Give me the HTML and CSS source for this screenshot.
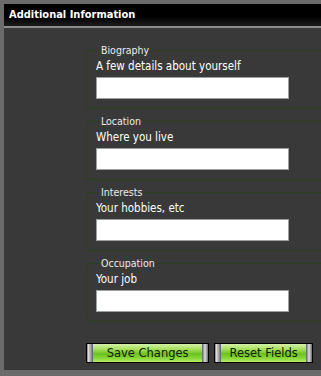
FILE: index.html
```html
<!DOCTYPE html>
<html lang="en">
<head>
  <meta charset="UTF-8" />
  <title>Additional Information</title>
  <link rel="stylesheet" href="styles.css">
</head>
<body>
  <div class="frame">
    <div class="panel">
      <div class="panel-title">Additional Information</div>

      <form class="panel-body">
        <fieldset>
          <legend>Biography</legend>
          <label for="bio">A few details about yourself</label>
          <input type="text" id="bio" />
        </fieldset>

        <fieldset>
          <legend>Location</legend>
          <label for="loc">Where you live</label>
          <input type="text" id="loc" />
        </fieldset>

        <fieldset>
          <legend>Interests</legend>
          <label for="int">Your hobbies, etc</label>
          <input type="text" id="int" />
        </fieldset>

        <fieldset>
          <legend>Occupation</legend>
          <label for="job">Your job</label>
          <input type="text" id="job" />
        </fieldset>

        <div class="actions">
          <button type="button" class="btn btn-save">Save Changes</button>
          <button type="reset" class="btn btn-reset">Reset Fields</button>
        </div>
      </form>
    </div>
  </div>
</body>
</html>
```

FILE: styles.css
```css
body {
  margin: 0;
  background: #6b6b6b;
  font-family: 'DejaVu Sans', Verdana, sans-serif;
}

.frame {
  width: 321px;
  height: 376px;
  padding: 4px 0 6px 4px;
  box-sizing: border-box;
  overflow: hidden;
}

.panel {
  background: #393939;
  height: 100%;
  overflow: hidden;
}

.panel-title {
  height: 22px;
  line-height: 22px;
  padding-left: 5px;
  background: linear-gradient(#000 0%, #000 55%, #1c1c1c 100%);
  border-bottom: 2px solid #8c8c8c;
  color: #fff;
  font-family: 'DejaVu Sans Condensed', 'DejaVu Sans', sans-serif;
  font-weight: bold;
  font-size: 11px;
}

.panel-body {
  padding: 16px 0 0 82px;
}

fieldset {
  width: 300px;
  margin: 0 0 6px 0;
  padding: 3px 0 9px 9px;
  border: 1px solid #2c3f1c;
  border-radius: 4px;
  display: flex;
  flex-direction: column;
}

legend {
  margin-left: 3px;
  padding: 0 2px;
  color: #ececec;
  font-family: 'DejaVu Sans Condensed', 'DejaVu Sans', sans-serif;
  font-size: 10.5px;
}

label {
  color: #fff;
  font-family: 'DejaVu Sans Condensed', 'DejaVu Sans', sans-serif;
  font-size: 11.5px;
  line-height: 14px;
  margin-bottom: 4px;
}

input {
  width: 193px;
  height: 22px;
  box-sizing: border-box;
  margin: 0;
  border: 1px solid #9aa0a4;
  background: #fff;
}

.actions {
  display: flex;
  justify-content: flex-end;
  gap: 5px;
  padding: 15px 8px 0 0;
}

.btn {
  height: 20px;
  padding: 0;
  border: 1px solid #000;
  color: #14200a;
  font-family: 'DejaVu Sans', Verdana, sans-serif;
  font-size: 11.5px;
  background:
    linear-gradient(to right, #4a4a4a 0, #e8e8e8 1px, #9a9a9a 4px, #5a5a5a 6px, transparent 6px,
      transparent calc(100% - 6px), #5a5a5a calc(100% - 6px), #e0e0e0 calc(100% - 3px), #6a6a6a 100%),
    linear-gradient(#d4f0a8 0%, #a6e05a 30%, #6cc21e 55%, #8ad838 80%, #b8ec6a 100%);
  cursor: pointer;
}

.btn-save {
  width: 126px;
}

.btn-reset {
  width: 101px;
}
```
